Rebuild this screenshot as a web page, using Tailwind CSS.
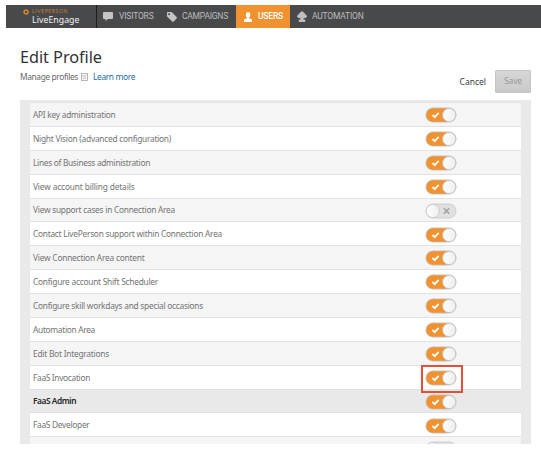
<!DOCTYPE html>
<html lang="en">
<head>
<meta charset="utf-8">
<title>Edit Profile</title>
<script src="https://cdn.jsdelivr.net/npm/@tailwindcss/browser@4"></script>
</head>
<body class="bg-white w-[541px] h-[451px] overflow-hidden font-['Noto_Sans',sans-serif]">
<nav class="mt-[5px] ml-[6px] h-[23px] bg-[#48494b] flex text-[#bcbcbd] text-[8.5px] leading-[23px] font-['Roboto',sans-serif] whitespace-nowrap">
  <div class="w-[91px] h-full border-r border-[#1d1d1e] flex shrink-0 pl-[17px]">
    <svg class="w-[6px] h-[6px] mt-[4px] mr-[3px] shrink-0" viewBox="0 0 6 6"><circle cx="3" cy="3" r="1.9" fill="none" stroke="#e58a28" stroke-width="1.3"/><circle cx="3" cy="3" r="2.6" fill="none" stroke="#e58a28" stroke-width=".7" stroke-dasharray="1 1.04"/></svg>
    <div class="pt-[3px]">
      <div class="h-[7px] leading-[7px] text-[5px] text-[#c9803a] font-['Lato',sans-serif]"><span data-w="36" data-f="5px Lato">LIVEPERSON</span></div>
      <div class="h-[11px] leading-[11px] text-[8.7px] text-[#f2f2f2] font-['Noto_Sans',sans-serif]"><span data-w="47.5" data-f="8.7px 'Noto Sans'">LiveEngage</span></div>
    </div>
  </div>
  <div class="w-[68px] shrink-0 flex items-center pl-[6px]">
    <svg class="w-[10px] h-[9px] mr-[6px]" viewBox="0 0 10 9"><path d="M1 0h8q1 0 1 1v5q0 1-1 1H5L2.5 9V7H1Q0 7 0 6V1q0-1 1-1z" fill="#c4c4c4"/></svg><span data-w="34.5" data-f="8.5px Roboto">VISITORS</span>
  </div>
  <div class="w-[71px] shrink-0 flex items-center pl-[2px]">
    <svg class="w-[10px] h-[10px] mr-[5px]" viewBox="0 0 10 10"><path fill-rule="evenodd" d="M.8 0H4.6L9.6 5q.8.8 0 1.6L6.7 9.6q-.7.7-1.5 0L0 4.6V.8Q0 0 .8 0zM2.1 1.2a1 1 0 100 2 1 1 0 000-2z" fill="#c4c4c4"/></svg><span data-w="46" data-f="8.5px Roboto">CAMPAIGNS</span>
  </div>
  <div class="w-[54px] shrink-0 flex items-center pl-[8px] bg-[#f0922f] text-white font-medium">
    <svg class="w-[8px] h-[10px] mr-[6px]" viewBox="0 0 8 10"><path d="M4 0Q6.3 0 6.3 2.6T4.8 5.7V6.3L7.2 7Q8 7.3 8 8.2V10H0V8.2Q0 7.3.8 7L3.2 6.3V5.7Q1.7 5.1 1.7 2.6T4 0z" fill="#fff"/></svg><span data-w="25" data-f="500 8.5px Roboto">USERS</span>
  </div>
  <div class="shrink-0 flex items-center pl-[7px]">
    <svg class="w-[10px] h-[11px] mr-[5px]" viewBox="0 0 10 11"><path d="M5 0L8 2.5V3.5H9.2V4.5H10V6H9V7H6.6V8.4H8.2V11H1.8V8.4H3.4V7H1V6H0V4.5H.8V3.5H2V2.5z" fill="#bdbdbd"/></svg><span data-w="51.5" data-f="8.5px Roboto">AUTOMATION</span>
  </div>
</nav>

<header class="ml-[20px] w-[511px] h-[72px] flex justify-between">
  <div class="pt-[17px]">
    <h1 class="h-[25px] leading-[25px] text-[16.3px] text-[#303234]"><span data-w="82" data-f="16.3px 'Noto Sans'">Edit Profile</span></h1>
    <div class="h-[14px] flex items-center text-[8.4px] leading-[14px] text-[#6a6a6a]">
      <span data-w="58" data-f="8.4px 'Noto Sans'">Manage profiles</span>
      <svg class="w-[7px] h-[8px] ml-[3px] mr-[5px]" viewBox="0 0 7 8"><rect x=".5" y=".5" width="6" height="7" fill="#fafafa" stroke="#a5a5a5" stroke-width=".8"/><path d="M1.5 2.5h4M1.5 4h4M1.5 5.5h4" stroke="#b0b0b0" stroke-width=".6"/></svg>
      <span data-w="42" data-f="8.4px 'Noto Sans'" class="text-[#256ca3]">Learn more</span>
    </div>
  </div>
  <div class="flex items-center h-[23px] mt-[42px] text-[8.5px]">
    <span data-w="26.5" data-f="8.5px 'Noto Sans'" class="text-[#3b3b3b] mr-[9px] pt-[1px]">Cancel</span>
    <button class="w-[36px] h-[23px] border border-[#c6c6c6] bg-linear-to-b from-[#d6d6d6] to-[#cacaca] text-[#999] rounded-[1px]"><span data-w="18" data-f="8.5px 'Noto Sans'">Save</span></button>
  </div>
</header>

<main class="ml-[20px] w-[511px] h-[343.5px] bg-[#e9e9e9] pl-[10px] pr-[10px] pt-[2px] overflow-hidden">
  <div id="rows" class="text-[8.35px] text-[#747474] border-t border-[#e4e4e4]"></div>
</main>

<script>
const rows = [
  ['API key administration', 82.5], ['Night Vision (advanced configuration)', 138],
  ['Lines of Business administration', 117], ['View account billing details', 101.5],
  ['View support cases in Connection Area', 142, 'off'], ['Contact LivePerson support within Connection Area', 189],
  ['View Connection Area content', 111.5], ['Configure account Shift Scheduler', 125],
  ['Configure skill workdays and special occasions', 170], ['Automation Area', 62],
  ['Edit Bot Integrations', 76], ['FaaS Invocation', 57, 'marked'],
  ['FaaS Admin', 43, 'selected'], ['FaaS Developer', 56.5], ['', 0, 'off']
];
const on = '<svg class="w-[32px] h-[16px]" viewBox="0 0 32 16"><rect x="1" y="1" width="30" height="14" rx="7" fill="#f0f0f0"/><path d="M8 1H23V15H8A7 7 0 018 1z" fill="#f0922f"/><rect x="1" y="1" width="30" height="14" rx="7" fill="none" stroke="#c3b9b0" stroke-width=".9"/><circle cx="24.2" cy="8" r="6.6" fill="url(#knob)" stroke="#c4c4c4" stroke-width=".9"/><path d="M7.5 8L9.7 10.2 13.7 5.9" fill="none" stroke="#fff" stroke-width="1.8"/></svg>';
const off = '<svg class="w-[32px] h-[16px]" viewBox="0 0 32 16"><rect x="1" y="1" width="30" height="14" rx="7" fill="#e0e0e0" stroke="#cbcbcb" stroke-width=".9"/><circle cx="7.8" cy="8" r="6.6" fill="url(#knob)" stroke="#c8c8c8" stroke-width=".9"/><path d="M18.8 5.2l5.4 5.4M24.2 5.2l-5.4 5.4" stroke="#a3a3a3" stroke-width="1.5"/></svg>';
document.getElementById('rows').innerHTML = rows.map(([label, w, state], i) => {
  const look = state === 'selected' ? 'bg-[#e9e9e9] text-[#252525] font-semibold' : i % 2 ? 'bg-white' : 'bg-[#f5f5f5]';
  const mark = state === 'marked' ? '<div class="absolute z-10 -left-[4px] -top-[5px] w-[42px] h-[28px] border-2 border-[#e35039]"></div>' : '';
  const text = label ? `<span data-w="${w}" data-f="${state === 'selected' ? '600 ' : ''}8.35px 'Noto Sans'">${label}</span>` : '<div></div>';
  return `<div class="flex items-center justify-between h-[23.88px] pt-[1.4px] pl-[3px] pr-[64px] border-b border-[#e2e2e2] ${look}">${text}<div class="relative w-[32px] h-[16px]">${state === 'off' ? off : on}${mark}</div></div>`;
}).join('');
// Track each label to its design width.
const ctx = document.createElement('canvas').getContext('2d');
document.querySelectorAll('[data-w]').forEach(el => {
  ctx.font = el.dataset.f;
  el.style.whiteSpace = 'nowrap';
  el.style.letterSpacing = (el.dataset.w - ctx.measureText(el.textContent).width) / el.textContent.length + 'px';
});
</script>
<svg class="absolute w-0 h-0"><defs><linearGradient id="knob" x1="0" y1="0" x2="1" y2="0"><stop offset="0" stop-color="#fff"/><stop offset="1" stop-color="#ededed"/></linearGradient></defs></svg>
</body>
</html>
